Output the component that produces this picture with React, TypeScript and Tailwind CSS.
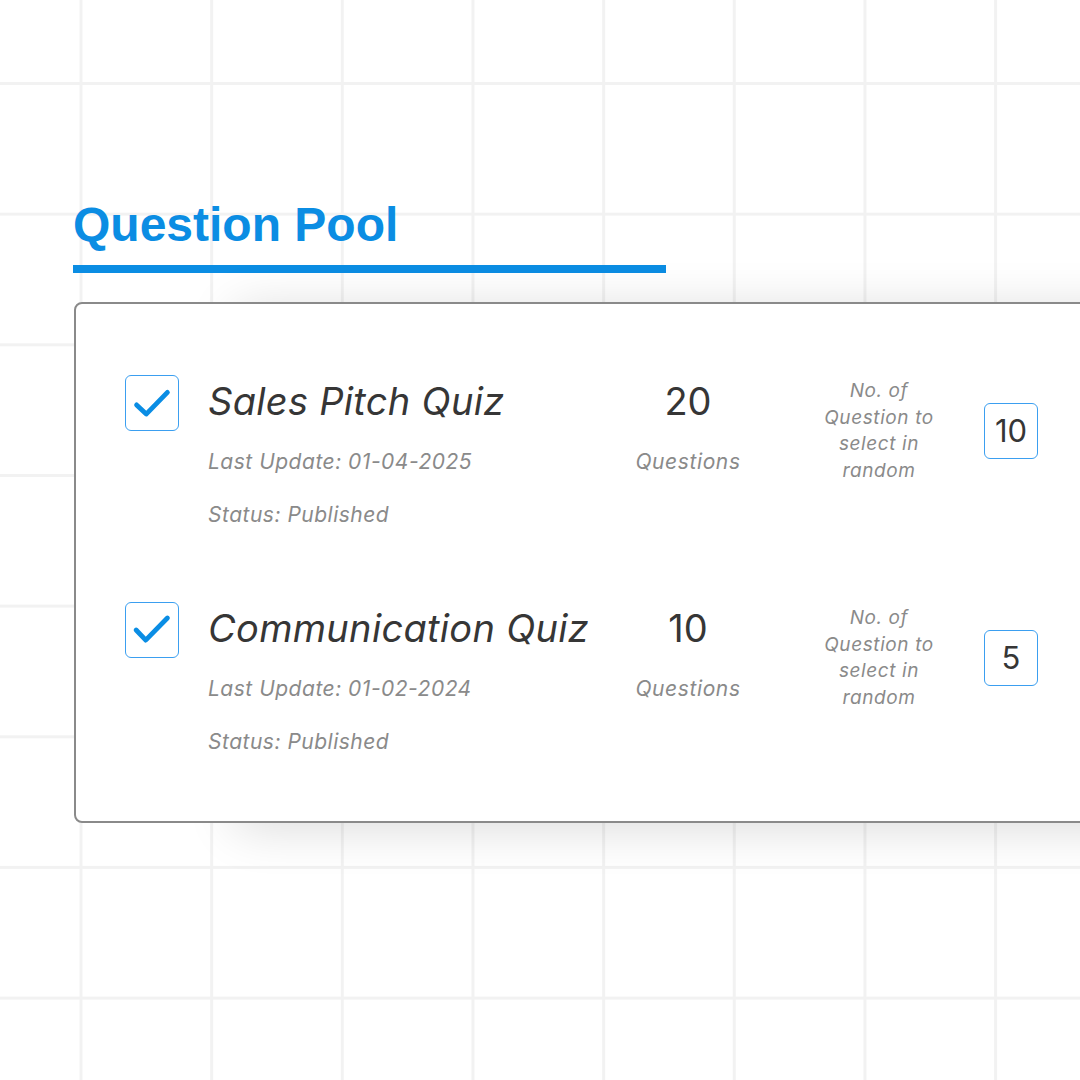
import React from 'react';

interface Quiz {
  title: string;
  updated: string;
  status: string;
  total: number;
  pick: number;
  check: string;
}

const quizzes: Quiz[] = [
  { title: 'Sales Pitch Quiz', updated: '01-04-2025', status: 'Published', total: 20, pick: 10, check: '11,30 21,39.5 43,17' },
  { title: 'Communication Quiz', updated: '01-02-2024', status: 'Published', total: 10, pick: 5, check: '10.5,28 20.5,38.5 43,15.5' },
];

const QuizRow: React.FC<{ quiz: Quiz }> = ({ quiz }) => (
  <div className="flex h-[227px] items-start">
    {/* checkbox */}
    <div className="h-[56px] w-[54px] shrink-0 rounded-md border border-[#3b9ff0] bg-white">
      <svg viewBox="0 0 54 56" className="h-full w-full">
        <polyline
          points={quiz.check}
          fill="none"
          stroke="#0a8de4"
          strokeWidth={5}
          strokeLinecap="round"
          strokeLinejoin="round"
        />
      </svg>
    </div>

    <div className="ml-[29px] w-[410px] shrink-0">
      <p className="mt-[4px] text-[38px] leading-[44px] italic tracking-[0.3px] text-[#363636]">{quiz.title}</p>
      <p className="mt-[25px] text-[21px] leading-[28px] italic tracking-[0.5px] text-[#8a8a8a]">Last Update: {quiz.updated}</p>
      <p className="mt-[25px] text-[21px] leading-[28px] italic tracking-[0.5px] text-[#8a8a8a]">Status: {quiz.status}</p>
    </div>

    <div className="w-[140px] shrink-0 text-center">
      <p className="mt-[4px] text-[38px] leading-[44px] text-[#363636]">{quiz.total}</p>
      <p className="mt-[25px] text-[21px] leading-[28px] italic tracking-[0.6px] text-[#8a8a8a]">Questions</p>
    </div>

    <div className="ml-[61px] mt-[3px] w-[120px] shrink-0 text-center text-[19px] leading-[26.5px] italic tracking-[0.6px] text-[#8a8a8a]">
      <span className="block">No. of</span>
      <span className="block">Question to</span>
      <span className="block">select in</span>
      <span className="block">random</span>
    </div>

    <div className="ml-[45px] mt-[28px] flex h-[56px] w-[54px] shrink-0 items-center justify-center rounded-md border border-[#3b9ff0] text-[31px] text-[#363636]">
      {quiz.pick}
    </div>
  </div>
);

export default function App() {
  return (
    <div className="relative h-[1080px] w-[1080px] overflow-hidden bg-white bg-[linear-gradient(to_right,#f2f2f2_3px,transparent_3px),linear-gradient(to_bottom,#f2f2f2_3px,transparent_3px)] [background-position:79.5px_82px] [background-size:130.67px_130.67px] font-[Inter,sans-serif]">
      <div className="pl-[73px] pt-[201px]">
        <h1 className="font-['Liberation_Sans',Arial,sans-serif] text-[48px] font-bold leading-[48px] text-[#0b8de3]">
          Question Pool
        </h1>
        <div className="mt-[16px] h-[8px] w-[593px] bg-[#0b8de3]" />

        <div className="ml-[1px] mt-[29px] h-[521px] w-[1060px] rounded-lg border-2 border-[#8a8a8a] bg-white pl-[49px] pt-[71px] shadow-[160px_6px_50px_rgba(0,0,0,0.14)]">
          {quizzes.map((quiz) => (
            <QuizRow key={quiz.title} quiz={quiz} />
          ))}
        </div>
      </div>
    </div>
  );
}
